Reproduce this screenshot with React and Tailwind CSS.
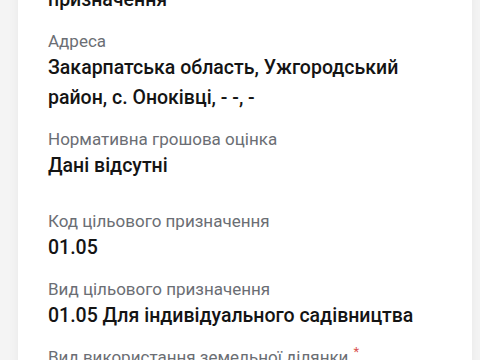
export default function App() {
  const label = "text-[17px] leading-[24px] text-[#6b6e74]";
  const value = "text-[19.5px] leading-[30px] font-medium text-[#141414]";

  return (
    <main
      className="h-[360px] overflow-hidden bg-[#f4f4f4] pl-[18px] pr-[8px]"
      style={{ fontFamily: "Roboto, 'Noto Sans', sans-serif" }}
    >
      <div className="-mt-[15px] bg-white px-[30px] pb-10 shadow-[0_0_10px_rgba(0,0,0,0.06)]">
        {/* tail of the previous field */}
        <p className={value}>призначення</p>

        {/* Address */}
        <div className="mt-[14px]">
          <p className={label}>Адреса</p>
          <p className={value}>
            Закарпатська область, Ужгородський район, с. Оноківці, - -, -
          </p>
        </div>

        {/* Valuation */}
        <div className="mt-[14px] pb-[14px]">
          <p className={label}>Нормативна грошова оцінка</p>
          <p className={value}>Дані відсутні</p>
        </div>

        <div className="mt-[14px]">
          <p className={label}>Код цільового призначення</p>
          <p className={value}>01.05</p>
        </div>

        <div className="mt-[14px]">
          <p className={label}>Вид цільового призначення</p>
          <p className={value}>01.05 Для індивідуального садівництва</p>
        </div>

        <div className="mt-[14px]">
          <p className={label}>
            Вид використання земельної ділянки
            <span className="relative -top-[7px] ml-[5px] text-[13px] text-[#d9534f]">*</span>
          </p>
          <p className={value}>Для ведення садівництва</p>
        </div>
      </div>
    </main>
  );
}
